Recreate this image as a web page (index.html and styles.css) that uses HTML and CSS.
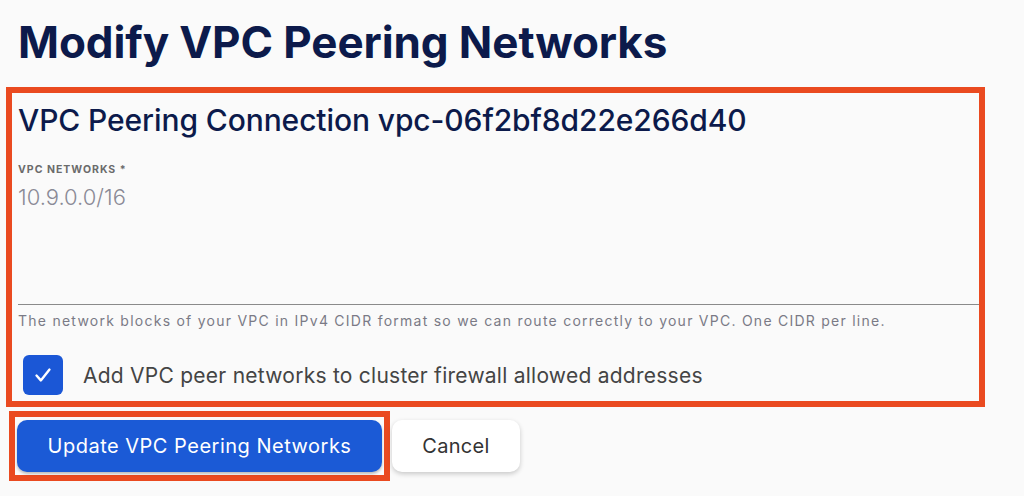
FILE: index.html
```html
<!DOCTYPE html>
<html lang="en">
<head>
<meta charset="utf-8">
<title>Modify VPC Peering Networks</title>
<link rel="stylesheet" href="styles.css">
</head>
<body>
<main class="page">
  <h1 class="page-title">Modify VPC Peering Networks</h1>
  <section class="card highlight">
    <h2 class="card-title">VPC Peering Connection vpc-06f2bf8d22e266d40</h2>
    <label class="field-label" for="nets">VPC NETWORKS *</label>
    <div class="textarea" id="nets">10.9.0.0/16</div>
    <p class="helper">The network blocks of your VPC in IPv4 CIDR format so we can route correctly to your VPC. One CIDR per line.</p>
    <div class="check-row">
      <span class="checkbox">
        <svg viewBox="0 0 24 24" width="26" height="26"><path d="M6 12.5l4 4.5L18 7" fill="none" stroke="#fff" stroke-width="2.2" stroke-linecap="round" stroke-linejoin="round"/></svg>
      </span>
      <span class="check-label">Add VPC peer networks to cluster firewall allowed addresses</span>
    </div>
  </section>
  <div class="actions">
    <div class="highlight-btn">
      <button class="btn btn-primary">Update VPC Peering Networks</button>
    </div>
    <button class="btn btn-secondary">Cancel</button>
  </div>
</main>
</body>
</html>
```
FILE: styles.css
```css
* { box-sizing: border-box; }
html, body { margin: 0; padding: 0; }
body {
  background: #fafafa;
  font-family: Inter, "Noto Sans", sans-serif;
  width: 1024px;
  height: 496px;
  overflow: hidden;
}
.page { padding: 0 0 0 6px; }
.page-title {
  margin: 17px 0 20px 12px;
  font-size: 44px;
  line-height: 50px;
  font-weight: 700;
  color: #0c1a4b;
  letter-spacing: -0.1px;
}
.card {
  width: 979px;
  border: 6px solid #ea4a20;
  padding: 9px 0 6px 6px;
}
.card-title {
  margin: 0;
  font-size: 30px;
  line-height: 36px;
  font-weight: 500;
  color: #0c1a4b;
  letter-spacing: -0.1px;
}
.field-label {
  display: block;
  margin-top: 25px;
  font-size: 10.5px;
  line-height: 14px;
  font-weight: 700;
  color: #6b6b6b;
  letter-spacing: 1px;
}
.textarea {
  margin-top: 8px;
  height: 120px;
  font-size: 22px;
  line-height: 24px;
  font-weight: 300;
  color: #8a8a96;
  border-bottom: 1.5px solid #8a8a8a;
}
.helper {
  margin: 7px 0 0;
  font-size: 14px;
  line-height: 18px;
  color: #7a7a86;
  letter-spacing: 1.25px;
}
.check-row {
  display: flex;
  align-items: center;
  gap: 20px;
  margin: 25px 0 0 5px;
}
.checkbox {
  width: 40px;
  height: 40px;
  border-radius: 6px;
  background: #1b57d6;
  display: flex;
  align-items: center;
  justify-content: center;
}
.check-label {
  font-size: 21px;
  color: #444;
  letter-spacing: 0.25px;
}
.actions {
  display: flex;
  align-items: center;
  gap: 2px;
  margin: 4px 0 0 3px;
}
.highlight-btn {
  border: 6px solid #ea4a20;
  padding: 3px 2px 3px 2px;
}
.btn {
  height: 52px;
  border-radius: 10px;
  font-family: inherit;
  font-size: 20px;
  border: none;
  padding: 0;
}
.btn-primary {
  width: 365px;
  background: #1b5ad6;
  color: #fff;
  letter-spacing: 0.5px;
  box-shadow: 0 2px 3px rgba(0,0,0,0.25);
}
.btn-secondary {
  width: 128px;
  background: #fff;
  color: #333;
  letter-spacing: 0.3px;
  box-shadow: 0 2px 5px rgba(0,0,0,0.2);
}
```
